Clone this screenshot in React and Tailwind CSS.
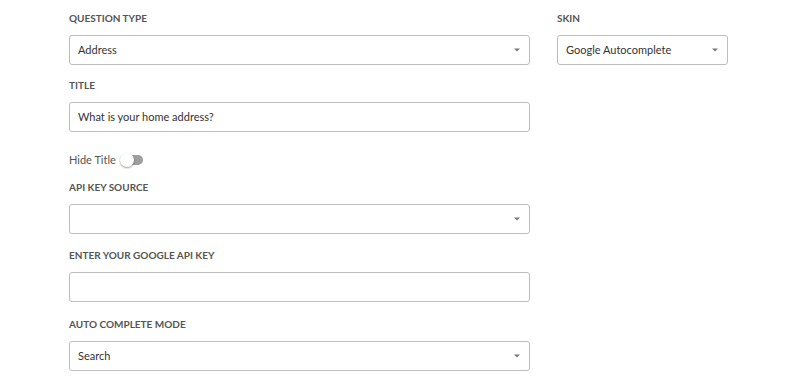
import React from "react";

const Caret = () => (
  <span className="absolute right-[9px] top-1/2 -translate-y-1/2 w-0 h-0 border-l-[3px] border-r-[3px] border-t-[3px] border-l-transparent border-r-transparent border-t-[#777]" />
);

const Label = ({ children, className = "" }) => (
  <div className={`text-[10px] leading-[14px] font-bold uppercase text-[#555] ${className}`}>
    {children}
  </div>
);

const Box = ({ value, select }) => (
  <div className="relative h-[30px] w-full rounded-[3px] border border-[#bdbdbd] bg-white px-[8px] flex items-center text-[11px] text-[#333]">
    <span>{value}</span>
    {select && <Caret />}
  </div>
);

const Field = ({ label, value, select, className = "" }) => (
  <div className={className}>
    <Label className="mb-[10px]">{label}</Label>
    <Box value={value} select={select} />
  </div>
);

const App = () => {
  return (
    <div
      className="min-h-[387px] w-[803px] bg-white pl-[69px] pt-[11px]"
      style={{ fontFamily: "Lato, 'Open Sans', sans-serif" }}
    >
      <div className="flex gap-[27px]">
        <div className="w-[461px]">
          <Field label="Question Type" value="Address" select />
          <Field label="Title" value="What is your home address?" className="mt-[13px]" />

          <div className="mt-[18px] h-[20px] flex items-center gap-[4px]">
            <span className="text-[11px] text-[#555]">Hide Title</span>
            <span className="relative w-[23px] h-[14px] flex items-center">
              <span className="absolute left-[3px] right-0 h-[10px] rounded-full bg-[#9e9e9e]" />
              <span className="absolute left-0 w-[14px] h-[14px] rounded-full bg-white shadow-[0_1px_2px_rgba(0,0,0,0.4)]" />
            </span>
          </div>

          <Field label="API Key Source" value="" select className="mt-[10px]" />
          <Field label="Enter your Google API key" value="" className="mt-[14px]" />
          <Field label="Auto Complete Mode" value="Search" select className="mt-[15px]" />
        </div>
        <div className="w-[171px]">
          <Field label="Skin" value="Google Autocomplete" select />
        </div>
      </div>
    </div>
  );
};

export default App;
